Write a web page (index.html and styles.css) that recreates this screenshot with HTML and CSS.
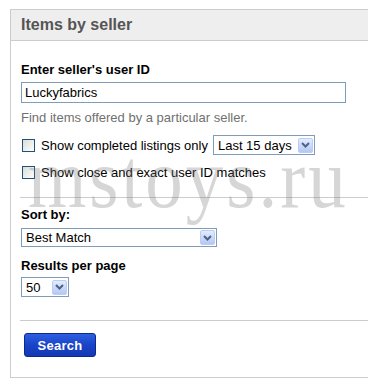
FILE: index.html
```html
<!DOCTYPE html>
<html>
<head>
<meta charset="utf-8">
<link rel="stylesheet" href="styles.css">
</head>
<body>
<div class="panel">
  <div class="panel-head">Items by seller</div>
  <div class="panel-body">
    <div class="section">
      <div class="label">Enter seller's user ID</div>
      <div class="textbox">Luckyfabrics</div>
      <div class="hint">Find items offered by a particular seller.</div>
      <div class="check-row">
        <span class="checkbox"></span>
        <span class="check-label">Show completed listings only</span>
        <span class="select sel-days"><span class="sel-text">Last 15 days</span><span class="sel-btn"><svg width="9" height="6" viewBox="0 0 9 6"><path d="M1 1 L4.5 4.5 L8 1" fill="none" stroke="#4d6185" stroke-width="2"/></svg></span></span>
      </div>
      <div class="check-row row2">
        <span class="checkbox"></span>
        <span class="check-label">Show close and exact user ID matches</span>
      </div>
    </div>
    <div class="section sec-sort">
      <div class="label">Sort by:</div>
      <span class="select sel-sort"><span class="sel-text">Best Match</span><span class="sel-btn"><svg width="9" height="6" viewBox="0 0 9 6"><path d="M1 1 L4.5 4.5 L8 1" fill="none" stroke="#4d6185" stroke-width="2"/></svg></span></span>
      <div class="label lbl-results">Results per page</div>
      <span class="select sel-num"><span class="sel-text">50</span><span class="sel-btn"><svg width="9" height="6" viewBox="0 0 9 6"><path d="M1 1 L4.5 4.5 L8 1" fill="none" stroke="#4d6185" stroke-width="2"/></svg></span></span>
    </div>
    <div class="section sec-btn">
      <button class="search-btn">Search</button>
    </div>
  </div>
  <div class="watermark">mstoys.ru</div>
</div>
</body>
</html>
```

FILE: styles.css
```css
html, body {
  margin: 0;
  padding: 0;
  background: #fff;
}
body {
  font-family: "Liberation Sans", Arial, sans-serif;
  font-size: 13px;
  color: #000;
}
.panel {
  position: relative;
  margin: 9px 0 0 10px;
  border: 1px solid #cccccc;
  border-right: none;
  height: 369px;
  box-sizing: border-box;
  overflow: hidden;
}
.panel-head {
  background: #eeeeee;
  border-bottom: 1px solid #cccccc;
  height: 30px;
  line-height: 30px;
  padding-left: 10px;
  font-size: 16px;
  font-weight: bold;
  color: #555555;
}
.panel-body {
  padding: 0 0 0 9px;
}
.section {
  padding: 21px 0 15px 1px;
  border-bottom: 1px solid #cccccc;
}
.label {
  font-weight: bold;
  line-height: 16px;
}
.textbox {
  margin-top: 4px;
  width: 325px;
  height: 21px;
  box-sizing: border-box;
  border: 1px solid #7f9db9;
  padding: 0 0 0 3px;
  line-height: 19px;
  font-size: 13px;
}
.hint {
  margin-top: 7px;
  color: #707070;
  line-height: 16px;
}
.check-row {
  display: flex;
  align-items: center;
  margin-top: 9px;
  height: 20px;
}
.row2 {
  margin-top: 7px;
}
.checkbox {
  width: 13px;
  height: 13px;
  box-sizing: border-box;
  border: 1px solid #1c5180;
  background: linear-gradient(135deg, #dcdcd7 0%, #f4f4f0 70%, #ffffff 100%);
  margin-left: 1px;
}
.check-label {
  margin-left: 6px;
}
.select {
  display: inline-flex;
  align-items: center;
  box-sizing: border-box;
  border: 1px solid #7f9db9;
  padding: 1px;
  background: #fff;
}
.sel-text {
  flex: 1;
  padding-left: 3px;
  line-height: 15px;
}
.sel-btn {
  width: 15px;
  height: 15px;
  box-sizing: border-box;
  border: 1px solid #b9cdf5;
  border-radius: 2px;
  background: linear-gradient(180deg, #e3ecfe 0%, #c6d6fa 60%, #b3c8f5 100%);
  display: flex;
  align-items: center;
  justify-content: center;
}
.sel-days {
  margin-left: 5px;
  width: 102px;
  height: 20px;
}
.sec-sort {
  padding-top: 9px;
  padding-bottom: 23px;
}
.sel-sort {
  margin-top: 5px;
  width: 196px;
  height: 19px;
}
.lbl-results {
  margin-top: 11px;
}
.sel-num {
  margin-top: 3px;
  width: 48px;
  height: 20px;
}
.sec-btn {
  border-bottom: none;
  padding-top: 12px;
}
.search-btn {
  display: block;
  margin-left: 3px;
  width: 72px;
  height: 24px;
  border: 1px solid #0b2a8c;
  border-radius: 3px;
  background: linear-gradient(180deg, #2d5fe0 0%, #1a44c8 50%, #1238b4 100%);
  color: #ffffff;
  font-family: "Liberation Sans", Arial, sans-serif;
  font-size: 13px;
  font-weight: bold;
  padding: 0;
  letter-spacing: 0.3px;
}
.watermark {
  position: absolute;
  left: 17px;
  top: 126px;
  font-family: "Liberation Serif", "Times New Roman", serif;
  font-size: 75px;
  line-height: 1;
  color: rgba(120, 120, 120, 0.3);
  letter-spacing: 3px;
  transform: scaleY(1.12);
  transform-origin: top left;
  pointer-events: none;
  white-space: nowrap;
}
```
